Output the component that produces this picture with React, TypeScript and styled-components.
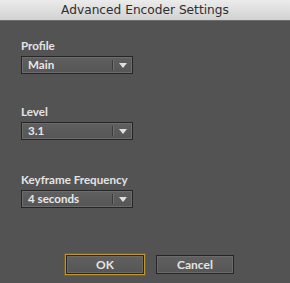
import styled, { createGlobalStyle } from "styled-components";

const GlobalStyle = createGlobalStyle`
    html, body {
        margin: 0;
        padding: 0;
        background: #535353;
    }
    body {
        font-family: Lato, "DejaVu Sans", "Liberation Sans", sans-serif;
    }
`;

const Window = styled.div`
    width: 290px;
    height: 283px;
    display: flex;
    flex-direction: column;
    background: #535353;
    overflow: hidden;
`;

const TitleBar = styled.div`
    height: 20px;
    flex-shrink: 0;
    display: flex;
    align-items: center;
    justify-content: center;
    background: linear-gradient(#ebebeb, #d2d2d2);
    border-bottom: 1px solid #6e6e6e;
    color: #2e2e2e;
    font-family: "DejaVu Sans", sans-serif;
    font-size: 12.2px;
`;

const Body = styled.div`
    flex: 1;
    display: flex;
    flex-direction: column;
    padding: 18px 0 0 21px;
`;

const Field = styled.div<{ $gap: number }>`
    display: flex;
    flex-direction: column;
    margin-bottom: ${(p) => p.$gap}px;
`;

const Label = styled.div`
    color: #e4e4e4;
    font-size: 11.6px;
    font-weight: bold;
    line-height: 13px;
    margin-bottom: 4px;
`;

const Select = styled.div`
    width: 110px;
    height: 16px;
    display: flex;
    align-items: center;
    border: 1px solid #262626;
    box-shadow: inset 0 0 0 1px #6c6c6c;
    background: linear-gradient(#5f5f5f, #565656);
    color: #e8e8e8;
    font-size: 11.6px;
    font-weight: bold;
`;

const Value = styled.div`
    flex: 1;
    padding-left: 6px;
    line-height: 16px;
`;

const Divider = styled.div`
    width: 1px;
    height: 10px;
    background: #3a3a3a;
    border-right: 1px solid #707070;
`;

const Arrow = styled.div`
    width: 18px;
    display: flex;
    align-items: center;
    justify-content: center;
`;

const Buttons = styled.div`
    display: flex;
    gap: 12px;
    margin: auto 0 9px 45px;
`;

const Button = styled.div<{ $primary?: boolean }>`
    width: 76px;
    height: 17px;
    display: flex;
    align-items: center;
    justify-content: center;
    color: #e4e4e4;
    font-size: 12px;
    font-weight: bold;
    background: linear-gradient(#606060, #565656);
    border: 1px solid #262626;
    box-shadow: ${(p) =>
        p.$primary
            ? "inset 0 0 0 1px #6a6a6a, 0 0 0 1px #c0962e, 0 0 0 2px #7a5f20"
            : "inset 0 0 0 1px #6a6a6a"};
`;

const fields = [
    { label: "Profile", value: "Main", gap: 31 },
    { label: "Level", value: "3.1", gap: 33 },
    { label: "Keyframe Frequency", value: "4 seconds", gap: 0 },
];

export default function App() {
    return (
        <>
            <GlobalStyle />
            <Window>
                <TitleBar>Advanced Encoder Settings</TitleBar>
                <Body>
                    {fields.map((f) => (
                        <Field key={f.label} $gap={f.gap}>
                            <Label>{f.label}</Label>
                            <Select>
                                <Value>{f.value}</Value>
                                <Divider />
                                <Arrow>
                                    <svg width="8" height="5" viewBox="0 0 8 5">
                                        <path d="M0 0 H8 L4 5 Z" fill="#e0e0e0" />
                                    </svg>
                                </Arrow>
                            </Select>
                        </Field>
                    ))}
                    <Buttons>
                        <Button $primary>OK</Button>
                        <Button>Cancel</Button>
                    </Buttons>
                </Body>
            </Window>
        </>
    );
}
